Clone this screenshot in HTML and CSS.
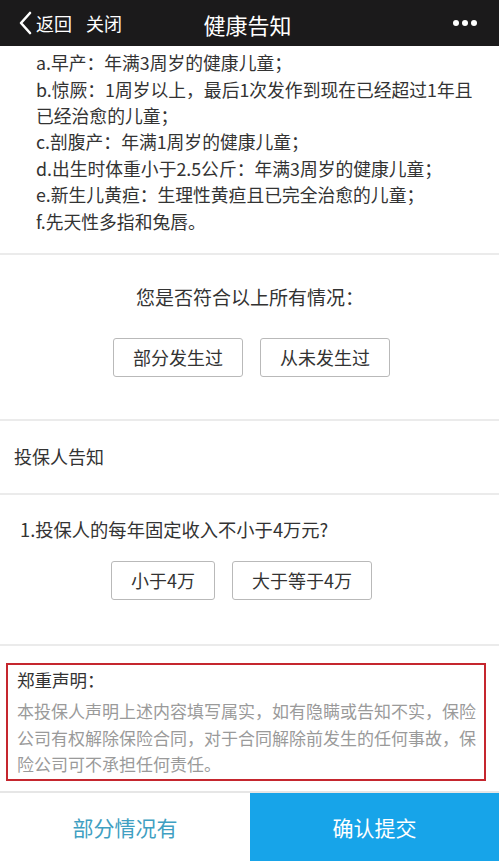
FILE: index.html
```html
<!DOCTYPE html>
<html lang="zh-CN">
<head>
<meta charset="utf-8">
<title>健康告知</title>
<link rel="stylesheet" href="styles.css">
</head>
<body>
<div class="page">
  <header class="nav">
    <div class="nav-left">
      <svg class="chev" width="14" height="24" viewBox="0 0 14 24"><path d="M12 2 L3 12 L12 22" fill="none" stroke="#fff" stroke-width="2.6" stroke-linecap="round" stroke-linejoin="round"/></svg>
      <span class="nav-link">返回</span>
      <span class="nav-link close">关闭</span>
    </div>
    <div class="nav-title">健康告知</div>
    <div class="nav-more"><i></i><i></i><i></i></div>
  </header>

  <main class="content">
    <section class="list">
      <p>a.早产：年满3周岁的健康儿童；</p>
      <p>b.惊厥：1周岁以上，最后1次发作到现在已经超过1年且<br>已经治愈的儿童；</p>
      <p>c.剖腹产：年满1周岁的健康儿童；</p>
      <p>d.出生时体重小于2.5公斤：年满3周岁的健康儿童；</p>
      <p>e.新生儿黄疸：生理性黄疸且已完全治愈的儿童；</p>
      <p>f.先天性多指和兔唇。</p>
    </section>

    <section class="question">
      <div class="q-title">您是否符合以上所有情况：</div>
      <div class="btns">
        <span class="btn">部分发生过</span>
        <span class="btn">从未发生过</span>
      </div>
    </section>

    <section class="group-title">投保人告知</section>

    <section class="question2">
      <div class="q2-title">1.投保人的每年固定收入不小于4万元?</div>
      <div class="btns btns2">
        <span class="btn b-small">小于4万</span>
        <span class="btn b-large">大于等于4万</span>
      </div>
    </section>

    <section class="declare-wrap">
      <div class="declare">
        <div class="d-title">郑重声明：</div>
        <div class="d-body">本投保人声明上述内容填写属实，如有隐瞒或告知不实，保险公司有权解除保险合同，对于合同解除前发生的任何事故，保险公司可不承担任何责任。</div>
      </div>
    </section>
  </main>

  <footer class="bar">
    <div class="bar-left">部分情况有</div>
    <div class="bar-right">确认提交</div>
  </footer>
</div>
</body>
</html>
```

FILE: styles.css
```css
* { box-sizing: border-box; margin: 0; padding: 0; }
html, body { width: 499px; height: 861px; overflow: hidden; }
body {
  font-family: "Noto Sans CJK SC", "Noto Sans", "Liberation Sans", sans-serif;
  background: #fff;
  color: #333;
}
.page { display: flex; flex-direction: column; height: 861px; }

.nav {
  height: 47px;
  background: #1b1a1b;
  color: #fff;
  display: grid;
  grid-template-columns: 1fr auto 1fr;
  align-items: center;
  padding: 0 22px 0 18px;
}
.nav-left { display: flex; align-items: center; }
.chev { margin-right: 4px; }
.nav-link { font-size: 18px; line-height: 1; }
.nav-link.close { margin-left: 14px; }
.nav-title { font-size: 22px; line-height: 1; padding-top: 1px; }
.nav-more { justify-self: end; display: flex; gap: 3px; }
.nav-more i { width: 6px; height: 6px; border-radius: 50%; background: #fff; display: block; }

.content { flex: 1; display: flex; flex-direction: column; }

.list {
  padding: 3px 6px 19px 36px;
  border-bottom: 2px solid #ebebeb;
}
.list p { font-size: 17.8px; line-height: 26.4px; }

.question {
  height: 166px;
  border-bottom: 2px solid #ebebeb;
  display: flex;
  flex-direction: column;
  align-items: center;
  padding-top: 28px;
}
.q-title { font-size: 19px; line-height: 28px; padding-left: 1px; }
.btns { display: flex; gap: 17px; margin-top: 27px; padding-left: 4px; }
.btn {
  height: 39px;
  border: 1px solid #b9b9b9;
  border-radius: 3px;
  font-size: 18px;
  line-height: 37px;
  text-align: center;
  color: #333;
  width: 130px;
}

.group-title {
  height: 74px;
  border-bottom: 2px solid #ebebeb;
  font-size: 18px;
  line-height: 70px;
  padding-left: 14px;
}

.question2 {
  height: 151px;
  border-bottom: 2px solid #ebebeb;
  display: flex;
  flex-direction: column;
  padding-top: 20px;
}
.q2-title { font-size: 18.3px; line-height: 28px; padding-left: 20px; }
.btns2 { align-self: center; margin-top: 18px; padding-left: 0; padding-right: 16px; }
.b-small { width: 104px; }
.b-large { width: 140px; }

.declare-wrap {
  flex: 1;
  padding: 17px 13px 10px 6px;
  border-bottom: 2px solid #e6e6e6;
}
.declare {
  border: 2px solid #c5262e;
  padding: 1px 3px 5px 9px;
  height: 118px;
}
.d-title { font-size: 17.5px; line-height: 27px; color: #333; }
.d-body { font-size: 17px; line-height: 26.5px; color: #9a9a9a; margin-top: 5px; }

.bar { height: 69px; display: flex; }
.bar-left {
  width: 250px;
  color: #3f9fc2;
  font-size: 21px;
  display: flex; align-items: center; justify-content: center;
}
.bar-right {
  flex: 1;
  background: #17a4e9;
  color: #fff;
  font-size: 21px;
  display: flex; align-items: center; justify-content: center;
}
```
